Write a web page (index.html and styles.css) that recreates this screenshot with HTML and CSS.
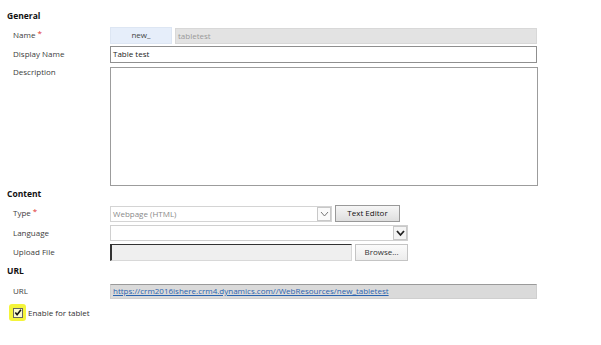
FILE: index.html
```html
<!DOCTYPE html>
<html lang="en">
<head>
    <meta charset="UTF-8">
    <title>Web Resource</title>
    <link rel="stylesheet" href="styles.css">
</head>
<body>
    <div class="form">
        <div class="section-title">General</div>

        <div class="row row-name">
            <div class="label">Name<span class="req">*</span></div>
            <div class="prefix">new_</div>
            <div class="field field-disabled">tabletest</div>
        </div>

        <div class="row row-display">
            <div class="label">Display Name</div>
            <div class="field field-text">Table test</div>
        </div>

        <div class="row row-desc">
            <div class="label">Description</div>
            <div class="field field-area"></div>
        </div>

        <div class="section-title section-content">Content</div>

        <div class="row row-type">
            <div class="label">Type<span class="req">*</span></div>
            <div class="select select-type">
                <span class="select-text">Webpage (HTML)</span>
                <span class="arrow arrow-light">
                    <svg width="11" height="8" viewBox="0 0 11 8"><path d="M2 2 L5.5 6 L9 2" fill="none" stroke="#777" stroke-width="1"/></svg>
                </span>
            </div>
            <div class="button button-editor">Text Editor</div>
        </div>

        <div class="row row-lang">
            <div class="label">Language</div>
            <div class="select select-lang">
                <span class="select-text"></span>
                <span class="arrow">
                    <svg width="11" height="8" viewBox="0 0 11 8"><path d="M2 2 L5.5 6 L9 2" fill="none" stroke="#222" stroke-width="1.8"/></svg>
                </span>
            </div>
        </div>

        <div class="row row-upload">
            <div class="label">Upload File</div>
            <div class="field field-file"></div>
            <div class="button button-browse">Browse...</div>
        </div>

        <div class="section-title section-url">URL</div>

        <div class="row row-url">
            <div class="label">URL</div>
            <div class="field field-url"><a href="#">https://crm2016ishere.crm4.dynamics.com//WebResources/new_tabletest</a></div>
        </div>

        <div class="row row-check">
            <span class="highlight">
                <span class="checkbox">
                    <svg width="9" height="9" viewBox="0 0 9 9"><path d="M1.5 4.5 L3.5 7 L7.8 1.5" fill="none" stroke="#111" stroke-width="1.8"/></svg>
                </span>
            </span>
            <span class="check-label">Enable for tablet</span>
        </div>
    </div>
</body>
</html>
```

FILE: styles.css
```css
* {
    margin: 0;
    padding: 0;
    box-sizing: border-box;
}

body {
    font-family: "Open Sans", "Noto Sans", Arial, sans-serif;
    font-size: 8px;
    color: #444;
    background: #fff;
}

.form {
    padding: 9px 0 0 7px;
    width: 601px;
}

.section-title {
    font-weight: 700;
    color: #111;
    font-size: 8.5px;
    height: 14px;
    line-height: 14px;
}

.section-content {
    margin-top: 1px;
}

.section-url {
    margin-top: 3px;
}

.row {
    display: flex;
    align-items: center;
}

.label {
    width: 103px;
    padding-left: 6px;
    padding-bottom: 2px;
    flex-shrink: 0;
    color: #3c3c3c;
}

.req {
    color: #e03030;
    margin-left: 2px;
    position: relative;
    top: -2px;
}

.row-name {
    height: 17px;
    margin-top: 4px;
}

.prefix {
    width: 62px;
    height: 17px;
    line-height: 14px;
    text-align: center;
    background: #e6eefa;
    border: 1px solid #dde6f3;
    color: #444;
}

.field {
    height: 16px;
    line-height: 13px;
    padding-left: 2px;
}

.field-disabled {
    margin-left: 3px;
    width: 362px;
    background: #e3e3e3;
    border: 1px solid #d8d8d8;
    color: #999;
}

.row-display {
    height: 17px;
    margin-top: 2px;
}

.field-text {
    width: 427px;
    height: 17px;
    line-height: 14px;
    border: 1px solid #8f8f8f;
    color: #222;
}

.row-desc {
    align-items: flex-start;
    margin-top: 4px;
}

.row-desc .label {
    margin-top: -1px;
}

.field-area {
    width: 428px;
    height: 119px;
    border: 1px solid #9c9c9c;
}

.row-type {
    height: 17px;
    margin-top: 4px;
}

.select {
    display: flex;
    align-items: center;
    height: 16px;
    border: 1px solid #d4d4d4;
    padding-left: 2px;
}

.select-type {
    width: 222px;
    color: #8a8a8a;
}

.select-lang {
    width: 298px;
    border-color: #d0d0d0;
}

.select-text {
    flex: 1;
}

.arrow {
    width: 14px;
    height: 14px;
    border: 1px solid #c8c8c8;
    display: flex;
    align-items: center;
    justify-content: center;
    background: #f4f4f4;
}

.arrow-light {
    background: #fafafa;
}

.button {
    height: 17px;
    line-height: 14px;
    text-align: center;
    border: 1px solid #999;
    background: linear-gradient(#f6f6f6, #dedede);
    color: #111;
}

.button-editor {
    width: 65px;
    margin-left: 3px;
}

.row-lang {
    height: 16px;
    margin-top: 3px;
}

.row-upload {
    height: 17px;
    margin-top: 3px;
}

.field-file {
    width: 242px;
    height: 17px;
    background: #efefef;
    border: 1px solid #d8d8d8;
    border-top: 1px solid #333;
    border-left: 2px solid #333;
}

.button-browse {
    width: 53px;
    margin-left: 3px;
    background: linear-gradient(#fbfbfb, #ececec);
    border-color: #c4c4c4;
    color: #333;
}

.row-url {
    height: 15px;
    margin-top: 6px;
}

.field-url {
    width: 427px;
    height: 15px;
    line-height: 12px;
    background: #dadada;
    border: 1px solid #cfcfcf;
    border-top: 1px solid #9a9a9a;
}

.field-url a {
    color: #2a64b0;
    text-decoration: underline;
}

.row-check {
    height: 17px;
    margin-top: 5px;
    padding-left: 2px;
}

.highlight {
    display: flex;
    align-items: center;
    justify-content: center;
    width: 17px;
    height: 17px;
    background: #f4f43a;
    border-radius: 3px;
}

.checkbox {
    display: flex;
    align-items: center;
    justify-content: center;
    width: 10px;
    height: 10px;
    border: 1px solid #666;
    background: #fbfbd0;
}

.check-label {
    margin-left: 2px;
    color: #333;
}
```
